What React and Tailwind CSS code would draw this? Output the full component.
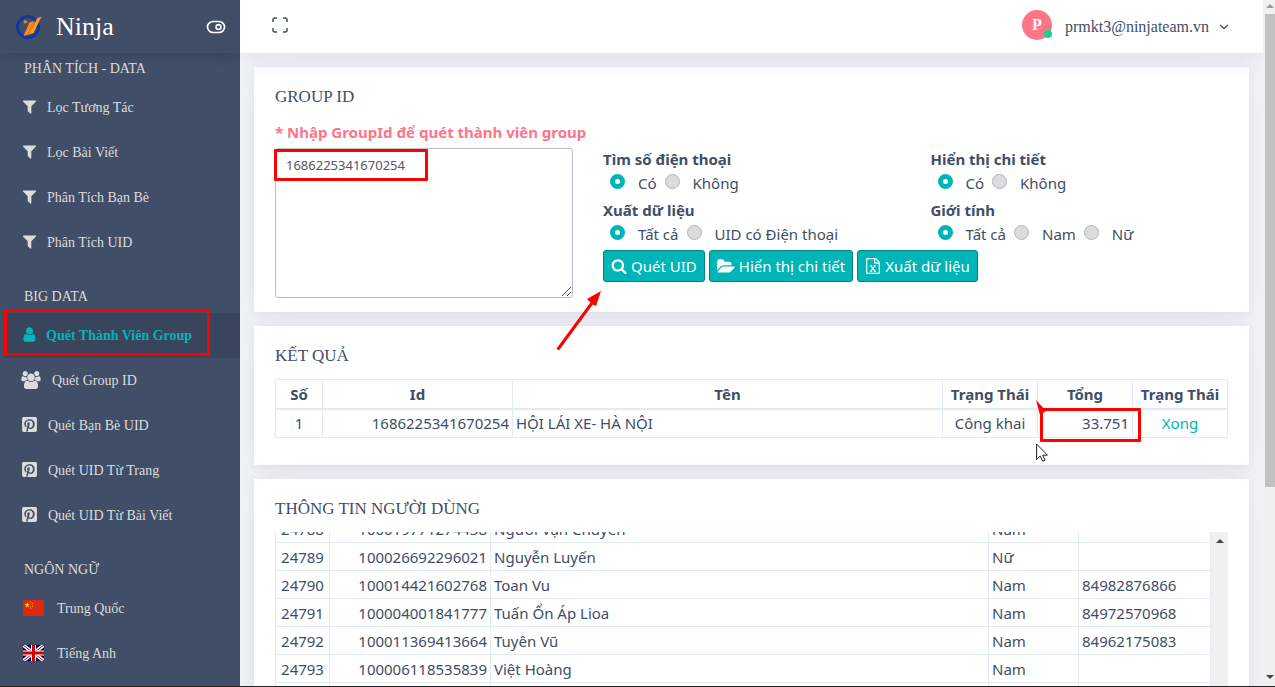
import { useLayoutEffect, useRef, useState } from "react";
import { FaPinterestSquare } from "react-icons/fa";
import { ChevronDown } from "lucide-react";

const FILTER = "M1595 295q17 41-14 70l-493 493v742q0 42-39 59-13 5-25 5-27 0-45-19l-256-256q-19-19-19-45v-486l-493-493q-31-29-14-70 17-39 59-39h1280q42 0 59 39z";
const USER = "M1536 1399q0 109-62.5 187t-150.5 78h-854q-88 0-150.5-78t-62.5-187q0-85 8.5-160.5t31.5-152 58.5-131 94-89 134.5-34.5q131 128 313 128t313-128q76 0 134.5 34.5t94 89 58.5 131 31.5 152 8.5 160.5zm-256-887q0 159-112.5 271.5t-271.5 112.5-271.5-112.5-112.5-271.5 112.5-271.5 271.5-112.5 271.5 112.5 112.5 271.5z";
const USERS = "M593 896q-162 5-265 128h-134q-82 0-138-40.5t-56-118.5q0-353 124-353 6 0 43.5 21t97.5 42.5 119 21.5q67 0 133-23-5 37-5 66 0 139 81 256zm1071 637q0 120-73 189.5t-194 69.5h-874q-121 0-194-69.5t-73-189.5q0-53 3.5-103.5t14-109 26.5-108.5 43-97.5 62-81 85.5-53.5 111.5-20q10 0 43 21.5t73 48 107 48 135 21.5 135-21.5 107-48 73-48 43-21.5q61 0 111.5 20t85.5 53.5 62 81 43 97.5 26.5 108.5 14 109 3.5 103.5zm-1024-1277q0 106-75 181t-181 75-181-75-75-181 75-181 181-75 181 75 75 181zm704 384q0 159-112.5 271.5t-271.5 112.5-271.5-112.5-112.5-271.5 112.5-271.5 271.5-112.5 271.5 112.5 112.5 271.5zm576 225q0 78-56 118.5t-138 40.5h-134q-103-123-265-128 81-117 81-256 0-29-5-66 66 23 133 23 59 0 119-21.5t97.5-42.5 43.5-21q124 0 124 353zm-128-609q0 106-75 181t-181 75-181-75-75-181 75-181 181-75 181 75 75 181z";
const SEARCH = "M1216 832q0-185-131.5-316.5t-316.5-131.5-316.5 131.5-131.5 316.5 131.5 316.5 316.5 131.5 316.5-131.5 131.5-316.5zm512 832q0 52-38 90t-90 38q-54 0-90-38l-343-342q-179 124-399 124-143 0-273.5-55.5t-225-150-150-225-55.5-273.5 55.5-273.5 150-225 225-150 273.5-55.5 273.5 55.5 225 150 150 225 55.5 273.5q0 220-124 399l343 343q37 37 37 90z";
const FOLDER = "M1879 952q0 31-31 66l-336 396q-43 51-120.5 86.5t-143.5 35.5h-1088q-34 0-60.5-13t-26.5-43q0-31 31-66l336-396q43-51 120.5-86.5t143.5-35.5h1088q34 0 60.5 13t26.5 43zm-343-344v160h-832q-94 0-197 47.5t-164 119.5l-337 396-5 6q0-4-.5-12.5t-.5-12.5v-960q0-92 66-158t158-66h320q92 0 158 66t66 158v32h544q92 0 158 66t66 158z";
const FILE = "M1596 380q28 28 48 76t20 88v1152q0 40-28 68t-68 28h-1344q-40 0-68-28t-28-68v-1600q0-40 28-68t68-28h896q40 0 88 20t76 48zm-444-244v376h376q-10-29-22-41l-313-313q-12-12-41-22zm384 1528v-1024h-416q-40 0-68-28t-28-68v-416h-768v1536h1280z";

const Glyph = ({ d, width = 1792, className, children }) => (
  <svg viewBox={`0 0 ${width} 1792`} fill="currentColor" className={className} aria-hidden="true">
    <path d={d} />
    {children}
  </svg>
);

const FilterIcon = () => <Glyph d={FILTER} className="mr-[9px] mb-[2px] size-[17px]" />;
const PinIcon = () => <FaPinterestSquare className="mr-[10px] mb-[2px] size-[17px]" aria-hidden="true" />;

const FlagCN = () => (
  <svg viewBox="0 0 30 22" preserveAspectRatio="none" className="mr-[13px] mb-[2px] ml-[2px] h-4 w-[21px]" aria-hidden="true">
    <rect width="30" height="22" fill="#de2910" />
    <path d="M6 3l1 2.6h2.8L7.600 7.400l.8 2.800L6 8.500l-2.400 1.700.8-2.800L2.200 5.600H5z" fill="#ffde00" />
    <g fill="#e8a000">
      <circle cx="11" cy="2.800" r="1" />
      <circle cx="13.500" cy="5" r="1" />
      <circle cx="13.500" cy="8.500" r="1" />
      <circle cx="11" cy="11" r="1" />
    </g>
  </svg>
);

const FlagGB = () => (
  <svg viewBox="0 0 42 32" className="mr-[13px] mb-[2px] ml-[2px] h-4 w-[21px]" aria-hidden="true">
    <rect width="42" height="32" fill="#006" />
    <path d="M0 0l42 32M42 0L0 32" stroke="#fff" strokeWidth="7" />
    <path d="M0 0l42 32M42 0L0 32" stroke="#c00" strokeWidth="2" />
    <path d="M21 0v32M0 16h42" stroke="#fff" strokeWidth="10" />
    <path d="M21 0v32M0 16h42" stroke="#c00" strokeWidth="6" />
  </svg>
);

const menu = [
  {
    title: "PHÂN TÍCH - DATA",
    items: [
      { label: "Lọc Tương Tác", icon: <FilterIcon /> },
      { label: "Lọc Bài Viết", icon: <FilterIcon /> },
      { label: "Phân Tích Bạn Bè", icon: <FilterIcon /> },
      { label: "Phân Tích UID", icon: <FilterIcon /> },
    ],
  },
  {
    title: "BIG DATA",
    items: [
      { label: "Quét Thành Viên Group", icon: <Glyph d={USER} className="mr-2 mb-[2px] size-[17px]" />, active: true },
      { label: "Quét Group ID", icon: <Glyph d={USERS} width={1920} className="mr-[11px] mb-[2px] h-[18px] w-5" /> },
      { label: "Quét Bạn Bè UID", icon: <PinIcon /> },
      { label: "Quét UID Từ Trang", icon: <PinIcon /> },
      { label: "Quét UID Từ Bài Viết", icon: <PinIcon /> },
    ],
  },
  {
    title: "NGÔN NGỮ",
    items: [
      { label: "Trung Quốc", icon: <FlagCN /> },
      { label: "Tiếng Anh", icon: <FlagGB /> },
    ],
  },
];

const users = [
  ["24788", "100019771274438", "Người Vận Chuyển", "Nam", ""],
  ["24789", "100026692296021", "Nguyễn Luyến", "Nữ", ""],
  ["24790", "100014421602768", "Toan Vu", "Nam", "84982876866"],
  ["24791", "100004001841777", "Tuấn Ổn Áp Lioa", "Nam", "84972570968"],
  ["24792", "100011369413664", "Tuyên Vũ", "Nam", "84962175083"],
  ["24793", "100006118535839", "Việt Hoàng", "Nam", ""],
  ["24794", "100009214473120", "Vũ Hùng", "Nam", ""],
  ["24795", "100012650318842", "Xuân Trường", "Nam", ""],
];

function Sidebar() {
  return (
    <aside className="flex w-60 shrink-0 flex-col overflow-hidden bg-[#404e67] font-['Liberation_Serif',serif] text-[#dcdcdc]">
      <div className="flex h-[53px] shrink-0 items-center px-[14px] shadow-[0_2px_12px_rgba(0,0,0,0.14)]">
        <svg viewBox="0 0 28 28" className="size-7" aria-hidden="true">
          <circle cx="14" cy="14" r="10.500" fill="none" stroke="#1238a0" strokeWidth="3" />
          <path d="M15.500 9.500l4-1.500-6 14-4 1z" fill="#ff8a1c" />
          <path d="M23 5.500L27.500 3.500 19.500 20l-4.500 1.500z" fill="#ff9c2c" />
          <path d="M18.500 9.500l2.500-1-5 12.500-2.500 1z" fill="#ff7a12" />
          <path d="M9.500 8.500l2-2 .5 1.700 2.500.3-2.500 1.800-2 .2z" fill="#e8882c" />
        </svg>
        <h2 className="ml-[14px] flex-1 text-[26px] text-white">Ninja</h2>
        <button type="button" aria-label="Thu gọn menu">
          <svg viewBox="0 0 20 14" className="h-[14px] w-5" fill="none" stroke="#fff" strokeWidth="1.700" aria-hidden="true">
            <rect x="1.500" y="1.500" width="17" height="11" rx="5.500" />
            <circle cx="12.500" cy="7" r="2.400" />
          </svg>
        </button>
      </div>
      <nav className="flex flex-col gap-4 text-sm">
        {menu.map((section) => (
          <div key={section.title}>
            <h3 className="flex h-8 items-center pl-6">{section.title}</h3>
            <ul>
              {section.items.map((item) => (
                <li key={item.label} className="relative pl-1">
                  <a
                    href="#"
                    className={
                      item.active
                        ? "flex h-[45px] items-center bg-[#38455c] pl-[17px] font-bold text-[#00b5b8]"
                        : "flex h-[45px] items-center pl-[17px]"
                    }
                  >
                    {item.icon}
                    {item.label}
                  </a>
                  {item.active && <Marker className="-top-1 right-[30px] bottom-[2px] left-1" />}
                </li>
              ))}
            </ul>
          </div>
        ))}
      </nav>
    </aside>
  );
}

// red highlight frame
const Marker = ({ className }) => (
  <span className={`pointer-events-none absolute z-10 rounded-[1px] border-3 border-[#f00] ${className}`} />
);

function Card({ title, className = "", children }) {
  return (
    <section className={`bg-white px-[21px] pt-[19px] shadow-[0_10px_40px_rgba(62,57,107,0.07),0_2px_9px_rgba(62,57,107,0.06)] ${className}`}>
      <h4 className="font-['Liberation_Serif',serif] text-[17px] leading-[22px]">{title}</h4>
      {children}
    </section>
  );
}

function RadioGroup({ legend, name, options }) {
  const [value, setValue] = useState(options[0]);
  return (
    <fieldset>
      <legend className="h-[23px] leading-[23px] font-bold">{legend}</legend>
      <div className="flex h-7 gap-2 pl-[7px]">
        {options.map((opt) => (
          <label key={opt} className="flex h-[23px] items-center gap-[13px]">
            <input
              type="radio"
              name={name}
              checked={value === opt}
              onChange={() => setValue(opt)}
              className="mb-[2px] size-[15px] appearance-none rounded-full border border-[#adb5bd] bg-[#dcdcdc] checked:border-5 checked:border-[#00b5b8] checked:bg-white"
            />
            {opt}
          </label>
        ))}
      </div>
    </fieldset>
  );
}

const Action = ({ icon, children }) => (
  <button type="button" className="flex h-8 items-center gap-1 rounded-[3px] border border-[#008385] bg-[#00b5b8] px-[7px] text-white">
    {icon}
    {children}
  </button>
);

function GroupForm() {
  return (
    <Card title="GROUP ID" className="pb-[14px]">
      <label htmlFor="groupId" className="mt-3 block leading-[24px] font-bold text-[#ff7588]">
        * Nhập GroupId để quét thành viên group
      </label>
      <div className="mt-1 flex gap-[30px]">
        <div className="relative shrink-0">
          <textarea
            id="groupId"
            defaultValue="1686225341670254"
            className="block h-[150px] w-[298px] resize-none rounded-[3px] border border-[#babfc7] px-[10px] py-[6px] text-[13px] leading-[20px] text-[#55595c]"
          />
          <svg viewBox="0 0 9 9" className="absolute right-[2px] bottom-[2px] size-[9px]" stroke="#555" strokeWidth="1" aria-hidden="true">
            <path d="M0 9l9-9M5 9l4-4" />
          </svg>
          <Marker className="top-px -left-px h-8 w-[154px]" />
        </div>
        <div className="-mr-[30px] flex-1">
          <div className="grid grid-cols-2">
            <RadioGroup legend="Tìm số điện thoại" name="phone" options={["Có", "Không"]} />
            <RadioGroup legend="Hiển thị chi tiết" name="detail" options={["Có", "Không"]} />
            <RadioGroup legend="Xuất dữ liệu" name="export" options={["Tất cả", "UID có Điện thoại"]} />
            <RadioGroup legend="Giới tính" name="gender" options={["Tất cả", "Nam", "Nữ"]} />
          </div>
          <div className="relative flex gap-1">
            <Action icon={<Glyph d={SEARCH} className="size-4" />}>Quét UID</Action>
            <Action icon={<Glyph d={FOLDER} width={1920} className="h-[17px] w-[18px]" />}>Hiển thị chi tiết</Action>
            <Action
              icon={
                <Glyph d={FILE} className="size-4">
                  <path d="M640 850l500 640M1140 850l-500 640" stroke="currentColor" strokeWidth="140" />
                  <path d="M540 850h260M980 850h260M540 1490h260M980 1490h260" stroke="currentColor" strokeWidth="100" />
                </Glyph>
              }
            >
              Xuất dữ liệu
            </Action>
            <svg viewBox="0 0 46 60" className="pointer-events-none absolute top-10 right-full z-10 h-[60px] w-[46px]" aria-hidden="true">
              <path d="M1.500 58.500L35 13" stroke="#f00" strokeWidth="3" strokeLinecap="round" />
              <path d="M44 1l-5 15-4-2-5-5z" fill="#f00" />
            </svg>
          </div>
        </div>
      </div>
    </Card>
  );
}

function Results() {
  const cell = "border border-[#e3ebf3] px-[3px]";
  return (
    <Card title="KẾT QUẢ" className="pb-[27px]">
      <table className="mt-3 w-full table-fixed border-collapse">
        <colgroup>
          <col className="w-[47px]" />
          <col className="w-[190px]" />
          <col />
          <col className="w-[95px]" />
          <col className="w-[95px]" />
          <col className="w-[95px]" />
        </colgroup>
        <thead>
          <tr className="h-[29px] border-b-2 border-[#e3ebf3]">
            {["Số", "Id", "Tên", "Trạng Thái", "Tổng", "Trạng Thái"].map((h, i) => (
              <th key={i} className="border border-b-2 border-[#e3ebf3] font-bold whitespace-nowrap">{h}</th>
            ))}
          </tr>
        </thead>
        <tbody>
          <tr className="h-[29px]">
            <td className={`${cell} text-center`}>1</td>
            <td className={`${cell} text-right`}>1686225341670254</td>
            <td className={cell}>HỘI LÁI XE- HÀ NỘI</td>
            <td className={`${cell} text-center`}>Công khai</td>
            <td className={`${cell} relative text-right`}>
              33.751
              <Marker className="-top-[2px] -right-[9px] -bottom-[5px] left-[2px]" />
              <svg viewBox="0 0 14 16" className="pointer-events-none absolute -top-[10px] -left-[2px] z-10 h-4 w-[14px]" aria-hidden="true">
                <path d="M0 0l10 11-6 4z" fill="#f00" />
              </svg>
              <svg viewBox="0 0 12 19" className="pointer-events-none absolute top-[33px] -left-[2px] z-10 h-[19px] w-3" aria-hidden="true">
                <path d="M.6 1v15.500l3.600-3.400 2.500 5.200 2.400-1.100-2.400-5h4.700z" fill="#fff" stroke="#223" />
              </svg>
            </td>
            <td className={`${cell} text-center text-[#00b5b8]`}>Xong</td>
          </tr>
        </tbody>
      </table>
    </Card>
  );
}

function UserInfo() {
  const listRef = useRef(null);
  const cell = "border border-[#e3ebf3] px-[3px]";

  useLayoutEffect(() => {
    listRef.current.scrollTop = 18;
  }, []);

  return (
    <Card title="THÔNG TIN NGƯỜI DÙNG">
      <div className="mt-3 flex h-[300px]">
        <div ref={listRef} className="flex-1 overflow-hidden">
          <table className="mb-[400px] w-full table-fixed border-collapse">
            <colgroup>
              <col className="w-[54px]" />
              <col className="w-[161px]" />
              <col />
              <col className="w-[90px]" />
              <col className="w-[132px]" />
            </colgroup>
            <tbody>
              {users.map(([no, id, name, gender, phone]) => (
                <tr key={no} className="h-7">
                  <td className={`${cell} text-center`}>{no}</td>
                  <td className={`${cell} text-right`}>{id}</td>
                  <td className={cell}>{name}</td>
                  <td className={cell}>{gender}</td>
                  <td className={cell}>{phone}</td>
                </tr>
              ))}
            </tbody>
          </table>
        </div>
        <div className="flex w-[17px] justify-center bg-[#f0f0f0] pt-[7px]">
          <svg viewBox="0 0 8 4" className="h-1 w-2" aria-hidden="true">
            <path d="M0 4l4-4 4 4z" fill="#444" />
          </svg>
        </div>
      </div>
    </Card>
  );
}

function Topbar() {
  return (
    <header className="relative z-[1] flex h-[53px] shrink-0 items-center bg-white pr-8 pl-8 font-['Liberation_Serif',serif] shadow-[0_2px_30px_2px_rgba(62,57,107,0.1)]">
      <button type="button" aria-label="Toàn màn hình" className="mb-1">
        <svg viewBox="0 0 16 16" className="size-4" fill="none" stroke="#404e67" strokeWidth="1.500" aria-hidden="true">
          <path d="M1 5V3a2 2 0 012-2h2M11 1h2a2 2 0 012 2v2M15 11v2a2 2 0 01-2 2h-2M5 15H3a2 2 0 01-2-2v-2" />
        </svg>
      </button>
      <button type="button" className="ml-auto flex items-center text-base">
        <span className="relative mr-[13px] mb-[3px] flex size-[30px] items-center justify-center rounded-full bg-[#ff7588] font-bold text-white">
          P
          <span className="absolute right-0 bottom-[2px] size-2 rounded-full bg-[#16d39a]" />
        </span>
        prmkt3@ninjateam.vn
        <ChevronDown className="ml-2 size-[14px]" strokeWidth={2} />
      </button>
    </header>
  );
}

export default function App() {
  return (
    <div className="flex h-screen overflow-hidden border-b border-[#222] bg-[#f3f4f8] font-['Noto_Sans',sans-serif] text-[15px] leading-[22px] text-[#404e67]">
      <Sidebar />
      <div className="flex min-w-0 flex-1 flex-col">
        <Topbar />
        <main className="flex flex-1 flex-col gap-[14px] overflow-hidden p-[14px]">
          <GroupForm />
          <Results />
          <UserInfo />
        </main>
      </div>
      {/* page scrollbar */}
      <div className="relative z-[2] flex w-3 flex-col items-center bg-[#f0f0f0] pl-[2px]">
        <svg viewBox="0 0 8 4" className="mt-1 h-1 w-2" aria-hidden="true">
          <path d="M0 4l4-4 4 4z" fill="#999" />
        </svg>
        <div className="mt-[6px] h-[69%] w-full bg-[#c1c1c1]" />
        <svg viewBox="0 0 8 4" className="mt-auto mb-[7px] h-1 w-2" aria-hidden="true">
          <path d="M0 0l4 4 4-4z" fill="#444" />
        </svg>
      </div>
    </div>
  );
}
